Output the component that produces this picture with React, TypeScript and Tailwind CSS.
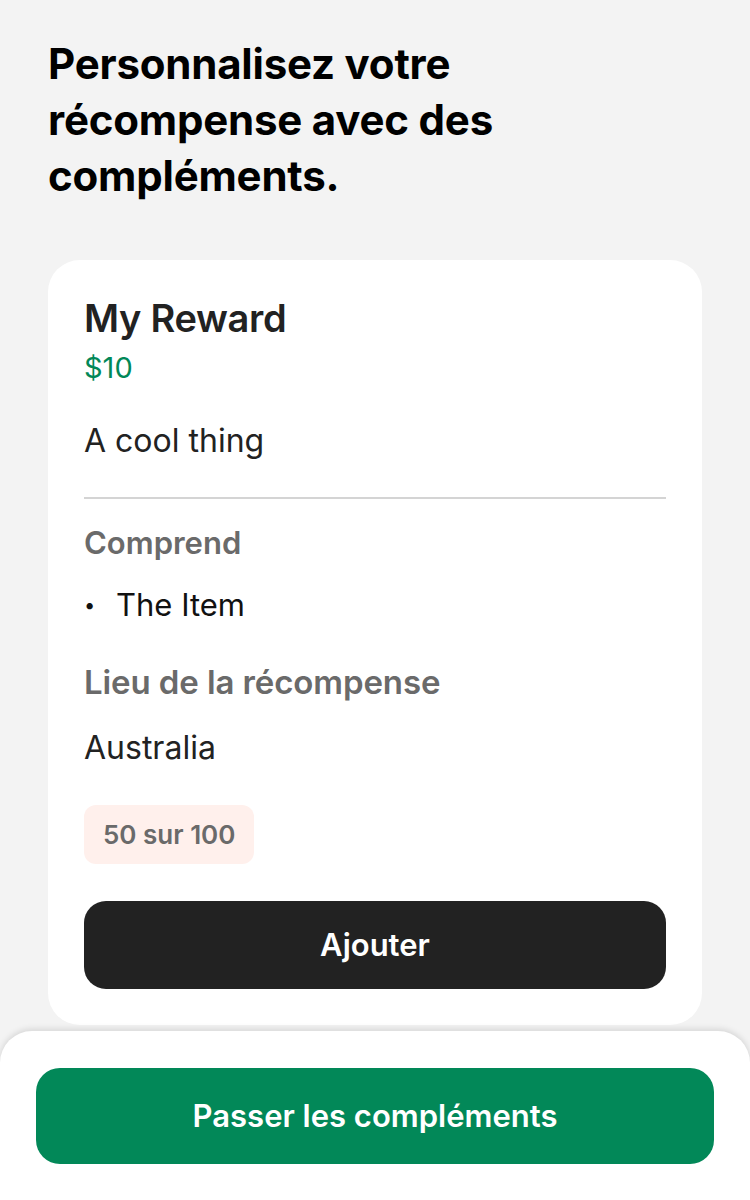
import React from "react";

export default function App() {
  return (
    <div
      className="w-[750px] h-[1200px] bg-[#f3f3f3] flex flex-col overflow-hidden"
      style={{ fontFamily: "Inter, 'Noto Sans', sans-serif" }}
    >
      <div className="px-[48px] pt-[36px]">
        <h1 className="text-[42px] leading-[56px] font-bold text-black tracking-[-0.2px] w-[500px]">
          Personnalisez votre récompense avec des compléments.
        </h1>
        <div className="mt-[56px] bg-white rounded-[32px] px-[36px] pt-[36px] pb-[36px]">
          <div className="text-[38px] leading-[44px] font-semibold text-[#222222] tracking-[-0.3px]">My Reward</div>
          <div className="text-[29px] leading-[36px] text-[#028858] mt-[10px]">$10</div>
          <div className="text-[32px] leading-[40px] text-[#222222] mt-[35px]">A cool thing</div>
          <div className="h-[2px] bg-[#d4d4d4] mt-[36px]" />
          <div className="text-[31px] leading-[40px] font-semibold text-[#6a6a6a] mt-[24px]">Comprend</div>
          <ul className="mt-[22px]">
            <li className="flex items-center text-[31px] leading-[40px] text-[#111111]">
              <span className="w-[32px] text-[20px]">•</span>
              <span>The Item</span>
            </li>
          </ul>
          <div className="text-[33px] leading-[40px] font-semibold text-[#6a6a6a] mt-[37px] tracking-[-0.1px]">Lieu de la récompense</div>
          <div className="text-[32px] leading-[40px] text-[#222222] mt-[26px]">Australia</div>
          <div className="mt-[37px] inline-flex items-center h-[59px] px-[19px] rounded-[12px] bg-[#fff0ec] text-[26px] font-semibold text-[#6a6a6a]">
            50 sur 100
          </div>
          <button className="mt-[37px] w-full h-[88px] rounded-[22px] bg-[#222222] text-white text-[31px] font-semibold">
            Ajouter
          </button>
        </div>
      </div>
      <div className="mt-auto h-[169px] bg-white rounded-t-[32px] shadow-[0_-2px_6px_rgba(0,0,0,0.12)] px-[36px] pt-[37px]">
        <button className="w-full h-[96px] rounded-[24px] bg-[#028858] text-white text-[31px] font-semibold">
          Passer les compléments
        </button>
      </div>
    </div>
  );
}
